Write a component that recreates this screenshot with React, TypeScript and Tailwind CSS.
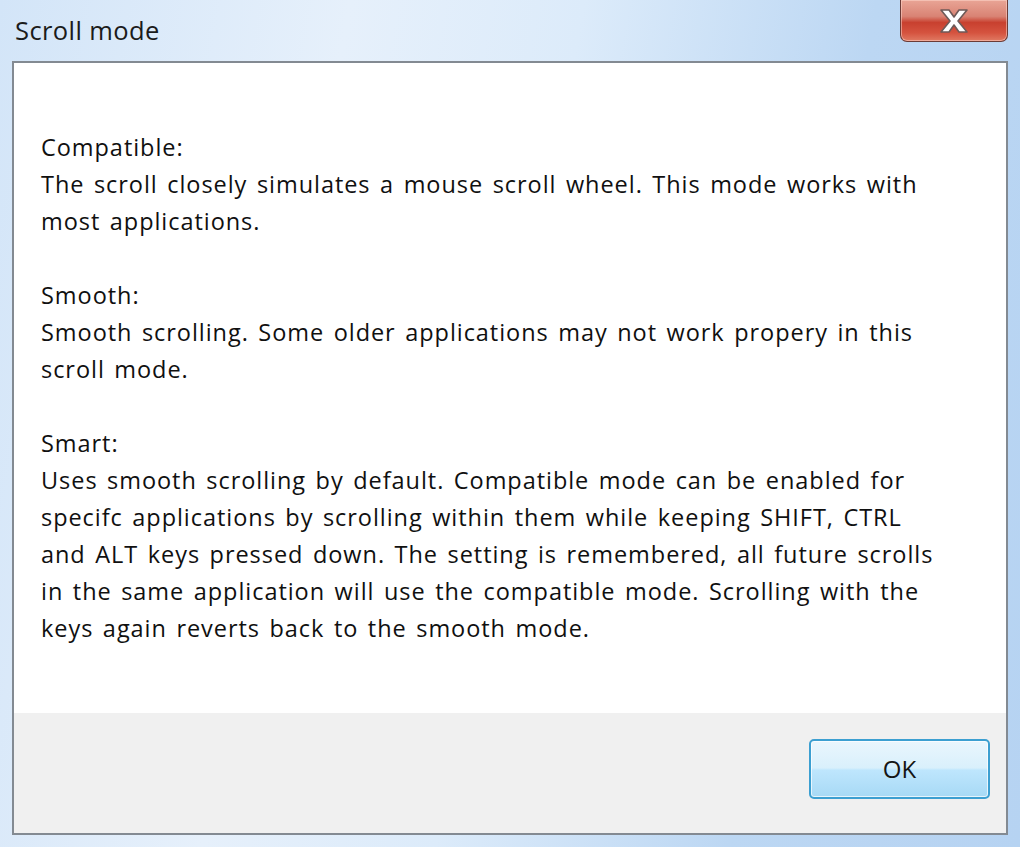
const sections = [
  {
    title: 'Compatible:',
    lines: ['The scroll closely simulates a mouse scroll wheel. This mode works with', 'most applications.'],
  },
  {
    title: 'Smooth:',
    lines: ['Smooth scrolling. Some older applications may not work propery in this', 'scroll mode.'],
  },
  {
    title: 'Smart:',
    lines: [
      'Uses smooth scrolling by default. Compatible mode can be enabled for',
      'specifc applications by scrolling within them while keeping SHIFT, CTRL',
      'and ALT keys pressed down. The setting is remembered, all future scrolls',
      'in the same application will use the compatible mode. Scrolling with the',
      'keys again reverts back to the smooth mode.',
    ],
  },
]

function CloseButton() {
  return (
    <div className="absolute right-[12px] top-0 flex h-[42px] w-[108px] items-center justify-center rounded-b-[7px] border border-t-0 border-[#6b3b36] bg-[linear-gradient(to_bottom,#e9a596_0%,#d98374_40%,#c8402f_55%,#d5533f_80%,#e07a63_100%)] shadow-[inset_0_0_0_1px_rgba(255,220,210,0.5)]">
      <svg width="36" height="26" viewBox="0 0 36 26">
        <path
          d="M5 2 L13 2 L18 9 L23 2 L31 2 L22 13 L31 24 L23 24 L18 17 L13 24 L5 24 L14 13 Z"
          fill="#ffffff"
          stroke="#6e5a58"
          strokeWidth="1.6"
          strokeLinejoin="round"
        />
      </svg>
    </div>
  )
}

export default function App() {
  return (
    <div className="relative flex h-[847px] w-[1020px] flex-col bg-[linear-gradient(100deg,#d3e5f8_0%,#e6f0fb_30%,#dcebfa_50%,#bcd7f3_75%,#b6d3f2_100%)] font-['Open_Sans',sans-serif]">
      <CloseButton />
      <div className="flex h-[61px] items-start pl-[15px] pt-[12px] text-[25.5px] leading-[36px] tracking-[0.4px] text-[#1b1b1b]">
        Scroll mode
      </div>
      <div className="mb-[12px] ml-[12px] mr-[12px] flex flex-1 flex-col border-2 border-[#838a92] bg-white">
        <div className="flex-1 pl-[27px] pt-[66px] text-[23.5px] leading-[37px] tracking-[0.95px] [word-spacing:2.5px] text-[#101010]">
          {sections.map((s) => (
            <div key={s.title} className="mb-[37px] last:mb-0">
              <div>{s.title}</div>
              {s.lines.map((line) => (
                <div key={line} className="whitespace-nowrap">
                  {line}
                </div>
              ))}
            </div>
          ))}
        </div>
        <div className="flex h-[120px] items-start justify-end bg-[#f0f0f0] pr-[16px] pt-[26px]">
          <button className="flex h-[60px] w-[181px] items-center justify-center rounded-[5px] border-2 border-[#3c9fd1] bg-[linear-gradient(to_bottom,#eaf6fd_0%,#d9f0fc_48%,#bee6fd_52%,#a7d9f5_100%)] text-[24px] text-[#151515] shadow-[inset_0_0_0_1px_rgba(255,255,255,0.7)]">
            OK
          </button>
        </div>
      </div>
    </div>
  )
}
